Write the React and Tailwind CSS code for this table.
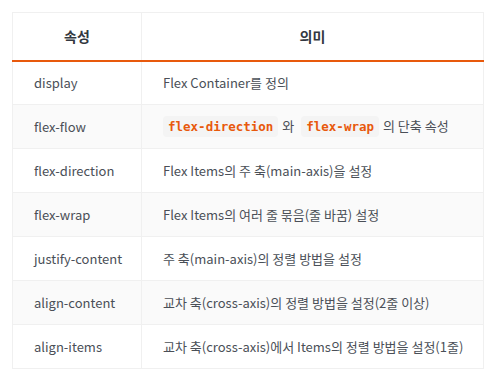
import React from 'react';

const rows = [
  { prop: 'display', desc: 'Flex Container를 정의' },
  {
    prop: 'flex-flow',
    desc: (
      <>
        <code className="mr-1 rounded bg-[#f4f4f4] px-[5px] py-[3px] font-['DejaVu_Sans_Mono',monospace] text-[12.5px] font-bold text-[#e8590c]">flex-direction</code>
        와{' '}
        <code className="mx-1 rounded bg-[#f4f4f4] px-[5px] py-[3px] font-['DejaVu_Sans_Mono',monospace] text-[12.5px] font-bold text-[#e8590c]">flex-wrap</code>
        의 단축 속성
      </>
    ),
  },
  { prop: 'flex-direction', desc: 'Flex Items의 주 축(main-axis)을 설정' },
  { prop: 'flex-wrap', desc: 'Flex Items의 여러 줄 묶음(줄 바꿈) 설정' },
  { prop: 'justify-content', desc: '주 축(main-axis)의 정렬 방법을 설정' },
  { prop: 'align-content', desc: '교차 축(cross-axis)의 정렬 방법을 설정(2줄 이상)' },
  { prop: 'align-items', desc: '교차 축(cross-axis)에서 Items의 정렬 방법을 설정(1줄)' },
];

export default function App() {
  return (
    <div className="min-h-[382px] bg-white pl-[12px] pt-[12px] font-['Noto_Sans_CJK_KR','Noto_Sans',sans-serif]">
      <table className="w-[472px] table-fixed border-collapse border border-[#f0f0f0] text-[13px] text-[#4a4f57]">
        <thead>
          <tr className="h-[48px] border-b-2 border-[#e8590c]">
            <th className="w-[129px] border-r border-[#f0f0f0] text-[14px] font-bold text-[#333840]">속성</th>
            <th className="text-[14px] font-bold text-[#333840]">의미</th>
          </tr>
        </thead>
        <tbody>
          {rows.map((r, i) => (
            <tr key={r.prop} className={`h-[44px] border-b border-[#f0f0f0] ${i % 2 === 1 ? 'bg-[#fafafa]' : 'bg-white'}`}>
              <td className="whitespace-nowrap border-r border-[#f0f0f0] px-[21px]">{r.prop}</td>
              <td className="whitespace-nowrap px-[21px]">{r.desc}</td>
            </tr>
          ))}
        </tbody>
      </table>
    </div>
  );
}
